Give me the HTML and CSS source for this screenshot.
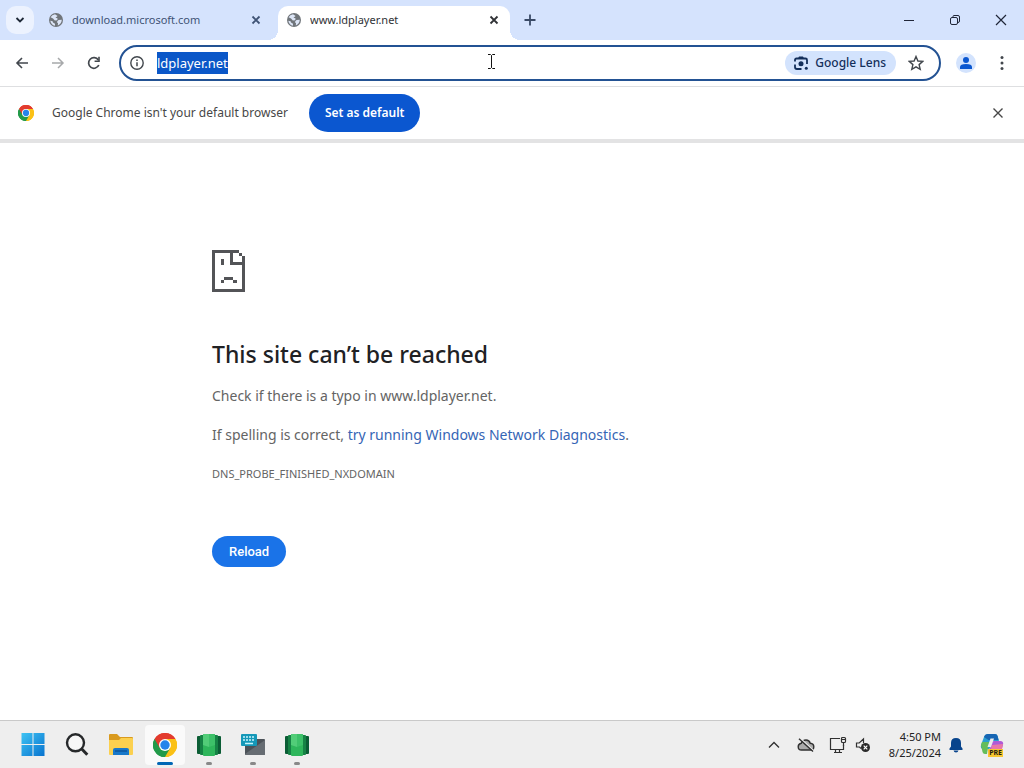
FILE: index.html
```html
<!DOCTYPE html>
<html lang="en">
<head>
<meta charset="utf-8">
<title>www.ldplayer.net</title>
<link rel="stylesheet" href="styles.css">
</head>
<body>
<svg class="defs" aria-hidden="true">
  <defs>
    <symbol id="globe" viewBox="0 0 16 16"><circle cx="8" cy="8" r="7" fill="#70757a"/><path d="M7 2.300Q4 2.600 2.600 5.300L5 6.500 6.800 8.600 9.300 8.300 9.500 6.200 7.500 5.800 9.600 3.900ZM2.300 8.700Q3 12.800 7 13.800L7 11.800 5 10.600 4.600 9.300ZM10.500 8 13.800 7.700Q13.500 11.800 9.800 13.500L10 11.200 8.800 10Z" fill="#dce5f6"/></symbol>
    <symbol id="cross" viewBox="0 0 12 12"><path d="M2.500 2.500l7 7M9.500 2.500l-7 7" fill="none" stroke="currentColor" stroke-width="1.800"/></symbol>
    <symbol id="chrome" viewBox="0 0 24 24"><path d="M12 12 1.600 6A12 12 0 0 1 22.400 6Z" fill="#e33b2e"/><path d="M12 12 22.400 6A12 12 0 0 1 12 24Z" fill="#fbc116"/><path d="M12 12V24A12 12 0 0 1 1.600 6Z" fill="#229a49"/><path d="M12 6H22.400A12 12 0 0 1 12 24L17.200 15Z" fill="#fbc116"/><path d="M6.800 15 1.600 6A12 12 0 0 0 12 24L17.200 15Z" fill="#229a49"/><path d="M1.600 6A12 12 0 0 1 22.400 6H12L6.800 15Z" fill="#e33b2e"/><circle cx="12" cy="12" r="6" fill="#fff"/><circle cx="12" cy="12" r="4.700" fill="#2585ea"/></symbol>
    <symbol id="emulator" viewBox="0 0 26 24"><rect x="1" y="3" width="8" height="18" rx="1" fill="#0b5d35"/><rect x="17" y="3" width="8" height="18" rx="1" fill="#0b5d35"/><rect x="4" y="2" width="18" height="20" rx="1" fill="#168345"/><rect x="7" y="1" width="12" height="22" rx="1" fill="#2eb65b"/><path d="M7 2q0-1 1-1h5v13l-6-2Z" fill="#52cd78"/><path d="M13 1h5q1 0 1 1v10l-6 2Z" fill="#3dc169"/></symbol>
  </defs>
</svg>

<header>
  <div class="tabstrip">
    <button class="tab-search" aria-label="Search tabs"><svg width="12" height="12" viewBox="0 0 12 12"><path d="M2.500 4 6 7.500 9.500 4" fill="none" stroke="#1f2937" stroke-width="1.800"/></svg></button>
    <div class="tab"><svg class="favicon"><use href="#globe"/></svg><span class="tab-title">download.microsoft.com</span><button class="tab-close" aria-label="Close tab"><svg><use href="#cross"/></svg></button></div>
    <div class="tab active"><svg class="favicon"><use href="#globe"/></svg><span class="tab-title">www.ldplayer.net</span><button class="tab-close" aria-label="Close tab"><svg><use href="#cross"/></svg></button></div>
    <button class="new-tab" aria-label="New tab"><svg width="12" height="12" viewBox="0 0 12 12"><path d="M6 .5v11M.5 6h11" stroke="#3a4a66" stroke-width="1.800"/></svg></button>
    <div class="window-buttons">
      <button aria-label="Minimize"><svg width="12" height="12" viewBox="0 0 12 12"><path d="M1 6.500h10" stroke="#202638"/></svg></button>
      <button aria-label="Restore"><svg width="12" height="12" viewBox="0 0 12 12" fill="none" stroke="#202638"><rect x="1.500" y="3.500" width="7" height="7" rx="1.500"/><path d="M4 3V2.500Q4 1.500 5 1.500h4q1.500 0 1.500 1.500v4q0 1.500-1.500 1.500"/></svg></button>
      <button aria-label="Close"><svg width="12" height="12" viewBox="0 0 12 12"><path d="M1 1l10 10M11 1 1 11" stroke="#202638" stroke-width="1.200"/></svg></button>
    </div>
  </div>

  <div class="toolbar">
    <div class="nav">
      <button aria-label="Back"><svg width="16" height="16" viewBox="0 0 16 16" fill="none" stroke="#42474d" stroke-width="1.600"><path d="M14 8H3M8 3 3 8 8 13"/></svg></button>
      <button aria-label="Forward"><svg width="16" height="16" viewBox="0 0 16 16" fill="none" stroke="#a7a9ab" stroke-width="1.500"><path d="M2 8h11M8 3 13 8 8 13"/></svg></button>
      <button aria-label="Reload page"><svg width="16" height="16" viewBox="0 0 16 16"><path d="M12.800 10A5.300 5.300 0 1 1 12.300 5" fill="none" stroke="#42474d" stroke-width="1.700"/><path d="M13.800 1.800V7H8.600V5.500h3.600V1.800Z" fill="#42474d"/></svg></button>
    </div>
    <div class="omnibox">
      <svg width="16" height="16" viewBox="0 0 16 16" fill="none" stroke="#42474d"><circle cx="8" cy="8" r="6.200" stroke-width="1.400"/><path d="M8 7.300v4M8 4.500v1.500" stroke-width="1.500"/></svg>
      <input id="address" class="address" type="text" value="ldplayer.net" aria-label="Address" spellcheck="false" autofocus>
      <button class="lens"><svg width="16" height="16" viewBox="0 0 16 16"><path d="M2 6.500V5q0-1.500 1.500-1.500h9Q14 3.500 14 5v4M2 9.500V12q0 2 2 2h4.500" fill="none" stroke="#132f5b" stroke-width="1.800"/><path d="M5 3.500 6 1.500h4l1 2Z" fill="#132f5b"/><circle cx="8" cy="8.700" r="2.500" fill="#132f5b"/><circle cx="13.300" cy="13.300" r="1.500" fill="#132f5b"/></svg>Google Lens</button>
      <button class="star" aria-label="Bookmark this tab"><svg width="16" height="16" viewBox="0 0 16 16"><path d="m8 1.500 1.900 4.500 4.900.4-3.700 3.200 1.100 4.700L8 11.800l-4.200 2.500 1.100-4.700L1.200 6.400 6.100 6Z" fill="none" stroke="#42474d" stroke-width="1.400"/></svg></button>
      <svg class="pointer" width="9" height="17" viewBox="0 0 9 17"><path d="M1 1.500h2.500l1 1 1-1H8M1 15.500h2.500l1-1 1 1H8M4.500 2.500v12" fill="none" stroke="#111"/></svg>
    </div>
    <button class="profile" aria-label="Profile"><svg width="12" height="12" viewBox="0 0 12 12" fill="#0b57d0"><circle cx="6" cy="3" r="3"/><path d="M0 12v-2q0-3 6-3t6 3v2Z"/></svg></button>
    <button class="menu" aria-label="Menu"><svg width="4" height="16" viewBox="0 0 4 16" fill="#42474d"><circle cx="2" cy="2.500" r="1.500"/><circle cx="2" cy="8" r="1.500"/><circle cx="2" cy="13.500" r="1.500"/></svg></button>
  </div>

  <div class="infobar">
    <svg width="16" height="16"><use href="#chrome"/></svg>
    <span>Google Chrome isn't your default browser</span>
    <button class="set-default">Set as default</button>
    <button class="dismiss" aria-label="Dismiss"><svg width="12" height="12" viewBox="0 0 12 12"><path d="M1.500 1.500l9 9M10.500 1.500l-9 9" stroke="#474747" stroke-width="1.400"/></svg></button>
  </div>
</header>

<main>
  <article class="error">
    <svg class="sad-page" width="33" height="42" viewBox="0 0 33 42" fill="#535457" shape-rendering="crispEdges"><path d="M0 0h27v3h-6v9h12v30H0ZM3 3v36h27V15H18V3ZM27 3h3v3h-3ZM30 6h3v6h-3ZM9 9h3v6H9ZM9 30h3v3H9ZM12 27h9v3H12ZM21 30h4v3h-4Z" fill-rule="evenodd"/></svg>
    <h1>This site can’t be reached</h1>
    <p>Check if there is a typo in www.ldplayer.net.</p>
    <p>If spelling is correct, <a href="#">try running Windows Network Diagnostics</a>.</p>
    <div class="code">DNS_PROBE_FINISHED_NXDOMAIN</div>
    <button class="reload">Reload</button>
  </article>
</main>

<footer class="taskbar">
  <div class="apps">
    <button aria-label="Start"><svg width="24" height="24" viewBox="0 0 24 24"><defs><linearGradient id="win" x2="1" y2="1"><stop stop-color="#3ec3f3"/><stop offset="1" stop-color="#0873cf"/></linearGradient></defs><path d="M.5 0h11v11H.5ZM12.500 0h11v11h-11ZM.5 12h11v11H.5ZM12.500 12h11v11h-11Z" fill="url(#win)"/></svg></button>
    <button aria-label="Search"><svg width="24" height="24" viewBox="0 0 24 24" fill="none" stroke="#26282a"><circle cx="10.500" cy="9.800" r="8.500" stroke-width="2.400" fill="#f7f7f7"/><path d="m16.800 16 5.500 5.700" stroke-width="3"/></svg></button>
    <button aria-label="File Explorer"><svg width="26" height="24" viewBox="0 0 26 24"><path d="M1 2q0-1 1-1h7l3 3h12q1 0 1 1v16H1Z" fill="#d99a1e"/><path d="M1 7h10l2-2h11q1 0 1 1v15q0 1-1 1H2q-1 0-1-1Z" fill="#fbd04f"/><path d="M5 17q0-2 2-2h12q2 0 2 2v5H5Z" fill="#1878ca"/><path d="M7 18h12" stroke="#0b559c" stroke-width="1.500"/></svg></button>
    <button class="open current" aria-label="Google Chrome"><svg width="24" height="24"><use href="#chrome"/></svg></button>
    <button class="open" aria-label="Emulator"><svg width="26" height="24"><use href="#emulator"/></svg></button>
    <button class="open" aria-label="Keyboard"><svg width="26" height="24" viewBox="0 0 26 24"><rect x="5" y="6" width="20" height="16" rx="1" fill="#4c5258"/><path d="m5 21 20-14v14q0 1-1 1H6Z" fill="#666c72"/><rect x="1" y="1" width="16" height="12" rx="1" fill="#1598b8"/><path d="M3 4h12M3 7h12" stroke="#c9f4fb" stroke-width="1.700" stroke-dasharray="2 1"/><path d="M5 10.500h8" stroke="#c9f4fb" stroke-width="1.500"/></svg></button>
    <button class="open" aria-label="Emulator"><svg width="26" height="24"><use href="#emulator"/></svg></button>
  </div>
  <div class="tray">
    <button class="tray-more" aria-label="Show hidden icons"><svg width="12" height="12" viewBox="0 0 12 12"><path d="m1 8.500 5-5 5 5" fill="none" stroke="#303030" stroke-width="1.300"/></svg></button>
    <button class="tray-cloud" aria-label="OneDrive"><svg width="18" height="16" viewBox="0 0 18 16"><path d="M4.500 13Q1.200 13 1.200 9.700 1.200 7 4.300 6.300 5.500 3 9 3q3.300 0 4.200 3.200 3.600.3 3.600 3.500 0 3.300-3.300 3.300Z" fill="#aaa" stroke="#303030" stroke-width="1.400"/><path d="m3.500 1.500 13 12" stroke="#ededed" stroke-width="1.300"/><path d="m2 1.700 14 12.800" stroke="#303030" stroke-width="1.400"/></svg></button>
    <button class="tray-net" aria-label="Network"><svg width="18" height="18" viewBox="0 0 18 18" fill="none" stroke="#303030" stroke-width="1.200"><path d="M11 2.500H1.500v11h13V9M5 16.500h8M6.500 13.500v3M10.500 13.500v3"/><rect x="12.500" y="1.500" width="4" height="5" rx="1"/><path d="M14.500 6.500V10M12.500 3.500h4"/></svg></button>
    <button class="tray-sound" aria-label="Volume"><svg width="16" height="16" viewBox="0 0 16 16"><path d="M6 11.500 4.500 10H1.500V6h2.700L8.500 2v4" fill="none" stroke="#303030" stroke-width="1.200"/><circle cx="10.500" cy="10.500" r="4.500" fill="#292929"/><path d="m8.700 8.700 3.600 3.600m0-3.600-3.600 3.600" stroke="#fff" stroke-width="1.200"/></svg></button>
    <div class="clock"><time>4:50 PM</time><time>8/25/2024</time></div>
    <button class="tray-bell" aria-label="Notifications"><svg width="14" height="16" viewBox="0 0 14 16" fill="#08448c"><path d="M7 1Q12 1 12 6v3.500l1.500 2V13H.5v-1.500l1.500-2V6q0-5 5-5ZM4.500 13.500h5Q9 15.500 7 15.500t-2.500-2Z"/></svg></button>
    <button class="copilot" aria-label="Copilot preview"><svg width="24" height="24" viewBox="0 0 24 24"><path d="M8 1h7q2 0 2.600 2L19 8h-5q-2 0-2.700 2L9.500 16H3.500Q0 16 1 12L4 4Q5 1 8 1Z" fill="#2a9fd0"/><path d="M4 4Q5 1 8 1h7q2 0 2.600 2l.9 4H8.500Z" fill="#1765b3"/><path d="M1 12l1-3h7l-2 12H5q-2 0-2.500-2Z" fill="#65bd5a"/><path d="M14 8h6q4 0 3 4l-2 7H9l2.500-9Q12 8 14 8Z" fill="#b05bd7"/><path d="m12 12 11-1-1 5H11Z" fill="#e978a8"/><path d="M10.500 5.500H14l-3 8.500H7.500Z" fill="#ededed"/></svg><span class="pre">PRE</span></button>
  </div>
</footer>
<script src="script.js"></script>
</body>
</html>
```
FILE: styles.css
```css
* { box-sizing: border-box; }
body {
  margin: 0;
  min-height: 100vh;
  display: flex;
  flex-direction: column;
  background: #fff;
  color: #474747;
  font: 12px/16px "Noto Sans", "Open Sans", sans-serif;
}
button {
  display: flex;
  align-items: center;
  justify-content: center;
  flex: none;
  padding: 0;
  border: 0;
  background: none;
  color: inherit;
  font: inherit;
}
svg { flex: none; display: block; }
.defs { position: absolute; width: 0; height: 0; }

.tabstrip { display: flex; align-items: center; height: 40px; padding-left: 6px; background: #d5e3fd; }
.tab-search { width: 28px; height: 28px; border-radius: 10px; background: #ecf2fe; }
.tab {
  flex: 0 1 232px;
  min-width: 0;
  height: 34px;
  align-self: flex-end;
  display: flex;
  align-items: center;
  gap: 8px;
  padding: 0 8px 6px;
  margin-left: 6px;
  color: #3f5375;
  font-size: 11px;
}
.tab.active {
  position: relative;
  border-radius: 10px 10px 0 0;
  background: #fff;
  color: #303236;
}
.tab.active::before, .tab.active::after {
  content: "";
  position: absolute;
  bottom: 0;
  width: 10px;
  height: 10px;
}
.tab.active::before { right: 100%; background: radial-gradient(circle at 0 0, #d5e3fd 10px, #fff 10px); }
.tab.active::after { left: 100%; background: radial-gradient(circle at 100% 0, #d5e3fd 10px, #fff 10px); }
.favicon { width: 16px; height: 16px; }
.tab-title { flex: 1; overflow: hidden; white-space: nowrap; }
.tab-close { width: 16px; height: 16px; }
.tab-close svg { width: 12px; height: 12px; }
.new-tab { width: 28px; height: 28px; margin-left: 6px; }
.window-buttons { display: flex; margin-left: auto; }
.window-buttons button { width: 46px; height: 40px; }

.toolbar { display: flex; align-items: center; height: 47px; padding: 0 12px 0 4px; border-bottom: 1px solid #dedfe1; }
.nav { display: flex; margin-right: 7px; }
.nav button { width: 36px; height: 32px; }
.omnibox {
  position: relative;
  flex: 1;
  min-width: 0;
  display: flex;
  align-items: center;
  height: 36px;
  padding: 0 15px 0 8px;
  border: 2px solid #235293;
  border-radius: 18px;
}
.address {
  flex: 1;
  min-width: 0;
  margin-left: 12px;
  padding: 0;
  border: 0;
  outline: 0;
  background: none;
  color: #202124;
  font: 13px/22px "Noto Sans", "Open Sans", sans-serif;
}
.address::selection { background: #0b57c8; color: #fff; }
.lens { gap: 6px; height: 24px; padding: 0 10px 0 8px; border-radius: 12px; background: #d3e3fd; color: #132f5b; font-weight: 500; }
.star { margin-left: 12px; }
.pointer { position: absolute; left: 366px; top: 6px; }
.profile { width: 20px; height: 20px; margin-left: 15px; border-radius: 10px; background: #d3e3fd; }
.menu { width: 20px; height: 24px; margin-left: 16px; }

.infobar { display: flex; align-items: center; min-height: 56px; padding: 0 20px 0 18px; border-bottom: 4px solid #e3e3e4; }
.infobar span { margin: 0 21px 0 18px; }
.set-default { height: 38px; padding: 0 16px; border-radius: 19px; background: #0b57d0; color: #fff; font-weight: 600; }
.dismiss { margin-left: auto; }

main { flex: 1; padding: 107px 24px 24px; }
.error { max-width: 600px; margin: 0 auto; color: #646464; font-size: 14px; line-height: 23px; }
.error h1 { margin: 46px 0 14px; color: #202124; font-size: 23px; line-height: 32px; font-weight: 500; }
.error p { margin: 0 0 16px; }
.error a { color: #3565b5; text-decoration: none; }
.code { font-size: 11px; }
.reload { height: 31px; margin-top: 51px; padding: 0 17px; border-radius: 16px; background: #1a73e8; color: #fff; font: 500 13px/16px Roboto, sans-serif; }

.taskbar { display: flex; align-items: center; justify-content: space-between; height: 48px; padding: 0 20px 0 13px; border-top: 1px solid #c9c9c9; background: #eee; color: #222; }
.apps { display: flex; gap: 4px; }
.apps button { position: relative; width: 40px; height: 40px; border-radius: 4px; }
.apps .current { background: #fafafa; }
.open::after { content: ""; position: absolute; left: 17px; bottom: 0; width: 6px; height: 3px; border-radius: 2px; background: #888; }
.current::after { left: 12px; width: 16px; background: #0067b5; }
.tray { display: flex; align-items: center; }
.tray-more { width: 24px; }
.tray-cloud { margin-left: 11px; }
.tray-net { margin-left: 14px; }
.tray-sound { margin-left: 8px; }
.clock { display: flex; flex-direction: column; align-items: flex-end; margin-left: 18px; font-size: 11px; }
.tray-bell { margin-left: 8px; }
.copilot { position: relative; margin-left: 17px; }
.pre { position: absolute; right: 1px; bottom: 0; padding: 0 1px; background: #f7c531; color: #1d1b12; font-size: 7px; line-height: 8px; font-weight: 700; }
```
FILE: script.js
```js
const address = document.getElementById("address");
address.focus();
address.select();
```
